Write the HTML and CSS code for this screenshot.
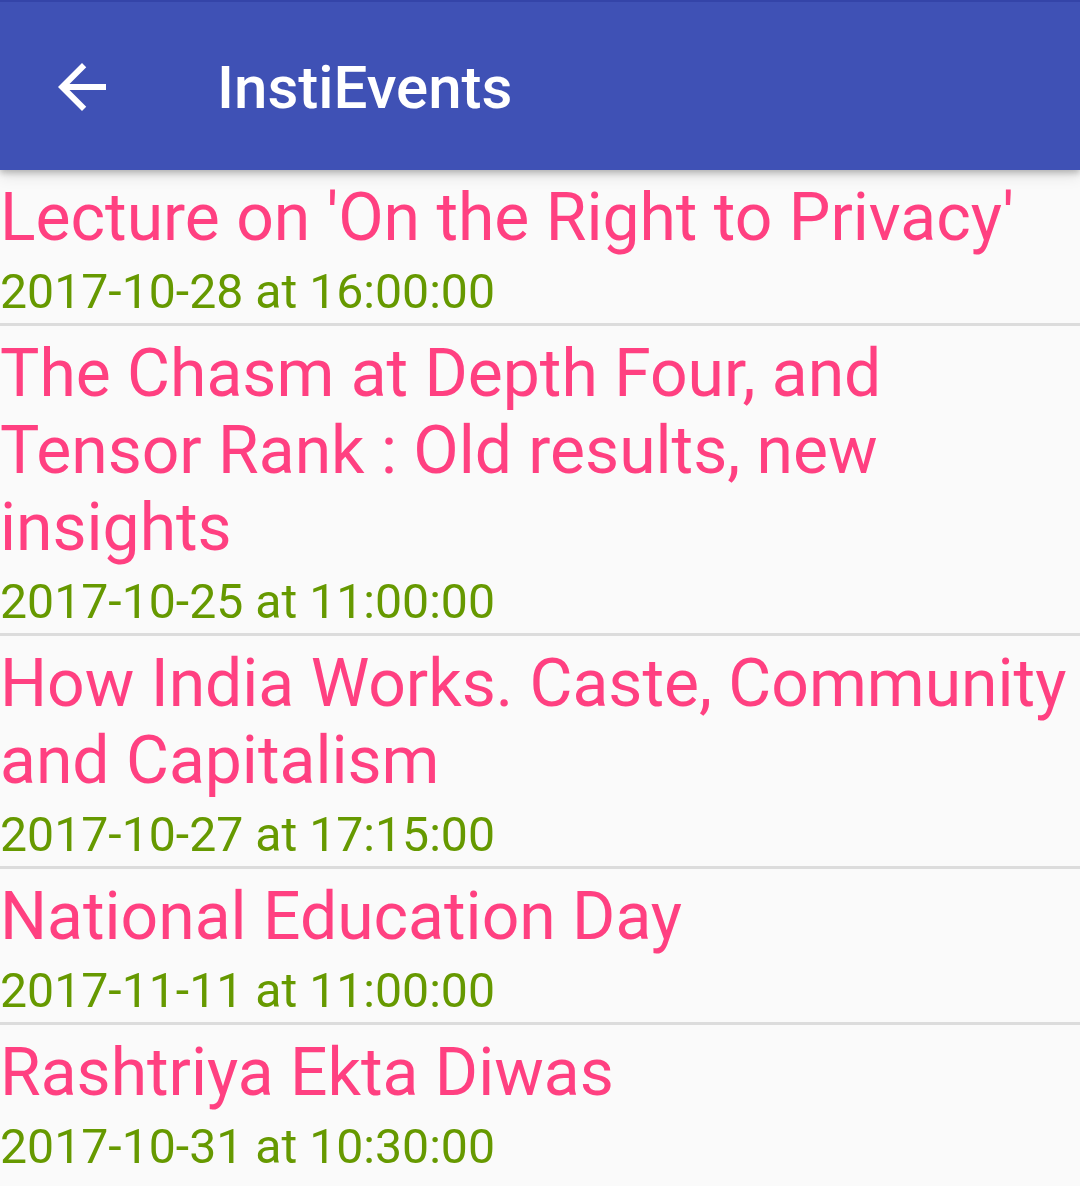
FILE: index.html
```html
<!DOCTYPE html>
<html>
<head>
<meta charset="utf-8">
<link rel="stylesheet" href="styles.css">
</head>
<body>
<header class="appbar">
  <div class="nav">
    <svg class="back" viewBox="0 0 24 24" width="72" height="72"><path fill="#fff" d="M20 11H7.83l5.59-5.59L12 4l-8 8 8 8 1.41-1.41L7.83 13H20v-2z"/></svg>
  </div>
  <h1 class="title">InstiEvents</h1>
</header>
<main class="list">
  <div class="item">
    <div class="ev-title">Lecture on 'On the Right to Privacy'</div>
    <div class="ev-date">2017-10-28 at 16:00:00</div>
  </div>
  <div class="item">
    <div class="ev-title">The Chasm at Depth Four, and Tensor Rank : Old results, new insights</div>
    <div class="ev-date">2017-10-25 at 11:00:00</div>
  </div>
  <div class="item">
    <div class="ev-title">How India Works. Caste, Community and Capitalism</div>
    <div class="ev-date">2017-10-27 at 17:15:00</div>
  </div>
  <div class="item">
    <div class="ev-title">National Education Day</div>
    <div class="ev-date">2017-11-11 at 11:00:00</div>
  </div>
  <div class="item">
    <div class="ev-title">Rashtriya Ekta Diwas</div>
    <div class="ev-date">2017-10-31 at 10:30:00</div>
  </div>
</main>
</body>
</html>
```

FILE: styles.css
```css
html, body {
  margin: 0;
  padding: 0;
  background: #fafafa;
  font-family: Roboto, "Noto Sans", sans-serif;
  overflow: hidden;
}
.appbar {
  position: relative;
  z-index: 2;
  height: 168px;
  border-top: 2px solid #3444a8;
  background: #3f51b5;
  display: flex;
  align-items: center;
  box-shadow: 0 3px 6px rgba(0,0,0,0.22), 0 6px 14px rgba(0,0,0,0.10);
}
.nav {
  width: 217px;
  height: 72px;
  display: flex;
  align-items: center;
  padding-left: 46px;
  box-sizing: border-box;
  margin-top: 1px;
}
.back {
  display: block;
}
.title {
  margin: 0;
  color: #fff;
  font-family: Roboto, sans-serif;
  font-weight: 500;
  font-size: 60px;
  line-height: 70px;
  margin-top: 4px;
}
.list {
  display: flex;
  flex-direction: column;
}
.item {
  padding: 9px 0 3px 0;
  border-bottom: 3px solid #dcdcdc;
}
.item:last-child {
  border-bottom: none;
}
.ev-title {
  color: #ff4081;
  font-size: 66px;
  line-height: 77px;
  margin-bottom: 8px;
}
.ev-date {
  color: #669900;
  font-size: 48.2px;
  line-height: 56px;
}
```
